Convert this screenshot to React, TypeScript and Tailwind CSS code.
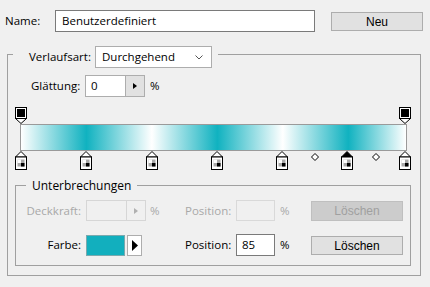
import React from 'react';

const font = { fontFamily: '"Open Sans", "Noto Sans", sans-serif' };
const btnFont = { fontFamily: '"Liberation Sans", Arial, sans-serif' };

const colorStops = [0, 17, 34, 51, 68, 85, 100];
const midpoints = [76.5, 92.5];

function StepArrow({ disabled }: { disabled?: boolean }) {
  return (
    <div
      className={`flex h-full w-[20px] items-center justify-center border ${
        disabled ? 'border-[#d6d6d6] bg-[#f0f0f0]' : 'border-[#adadad] bg-[#e1e1e1]'
      }`}
    >
      <svg width="4" height="6" viewBox="0 0 4 6">
        <path d="M0 0 L4 3 L0 6 Z" fill={disabled ? '#b0b0b0' : '#000'} />
      </svg>
    </div>
  );
}

function ColorStop({ pos, selected }: { pos: number; selected?: boolean }) {
  return (
    <svg
      className="absolute top-[44px]"
      style={{ left: 13 + (pos / 100) * 384 - 6 }}
      width="12"
      height="19"
      viewBox="0 0 12 19"
    >
      <path d="M6 0.5 L11.5 6 L0.5 6 Z" fill={selected ? '#000' : '#fff'} stroke="#000" />
      <rect x="0.5" y="6" width="11" height="12.5" fill="#fff" stroke="#000" />
      <rect x="2.5" y="8.5" width="7" height="7" fill="#a8a8a8" />
      <rect x="2.5" y="8.5" width="3.5" height="3.5" fill="#fff" />
      <rect x="6" y="12" width="3.5" height="3.5" fill="#000" />
    </svg>
  );
}

function OpacityStop({ pos }: { pos: number }) {
  return (
    <svg
      className="absolute top-0"
      style={{ left: 13 + (pos / 100) * 384 - 6 }}
      width="12"
      height="17"
      viewBox="0 0 12 17"
    >
      <rect x="0.5" y="0.5" width="11" height="11" fill="#fff" stroke="#000" />
      <rect x="2" y="2" width="8" height="8" fill="#000" />
      <path d="M0.5 11.5 L11.5 11.5 L6 16.5 Z" fill="#fff" stroke="#000" />
    </svg>
  );
}

function Midpoint({ pos }: { pos: number }) {
  return (
    <svg
      className="absolute top-[46px]"
      style={{ left: 13 + (pos / 100) * 384 - 4 }}
      width="8"
      height="8"
      viewBox="0 0 8 8"
    >
      <path d="M4 0.5 L7.5 4 L4 7.5 L0.5 4 Z" fill="#fff" stroke="#000" />
    </svg>
  );
}

export default function App() {
  return (
    <div className="h-[287px] w-[430px] overflow-hidden bg-[#f0f0f0] text-[11.5px] text-black" style={font}>
      {/* Name row */}
      <div className="flex items-center pl-[5px] pt-[10px]">
        <span className="w-[50px]">Name:</span>
        <div className="flex h-[22px] w-[260px] items-center border border-[#7a7a7a] bg-white pl-[6px]">
          Benutzerdefiniert
        </div>
        <button
          className="ml-[16px] h-[19px] w-[92px] border border-[#adadad] bg-[#e1e1e1] text-[12px]"
          style={btnFont}
        >
          Neu
        </button>
      </div>

      {/* Outer group */}
      <div className="ml-[7px] mt-[22px] h-[222px] w-[414px] border border-[#a0a0a0]">
        <div className="-mt-[9px] ml-[5px] flex w-fit items-center bg-[#f0f0f0] pl-[16px] pr-[6px]">
          <span className="w-[66px]">Verlaufsart:</span>
          <div className="flex h-[22px] w-[117px] items-center justify-between border border-[#adadad] bg-white pl-[6px] pr-[8px]">
            <span>Durchgehend</span>
            <svg width="8" height="5" viewBox="0 0 8 5">
              <path d="M0.5 0.5 L4 4 L7.5 0.5" fill="none" stroke="#555" />
            </svg>
          </div>
        </div>

        <div className="mt-[7px] flex h-[22px] items-center pl-[23px]">
          <span className="w-[54px]">Glättung:</span>
          <div className="flex h-full w-[60px]">
            <div className="flex h-full w-[41px] items-center border border-r-0 border-[#adadad] bg-white pl-[5px]">0</div>
            <StepArrow />
          </div>
          <span className="ml-[5px]">%</span>
        </div>

        {/* Gradient editor */}
        <div className="relative mt-[10px] h-[63px]">
          <OpacityStop pos={0} />
          <OpacityStop pos={100} />
          <div className="ml-[12px] mt-[17px] inline-block h-[27px] w-[387px] border border-[#9a9a9a] align-top">
            <div className="h-full w-full bg-[linear-gradient(to_right,#ffffff_0%,#10b2c0_17%,#ffffff_34%,#10b2c0_51%,#ffffff_68%,#10b2c0_85%,#ffffff_100%)]" />
          </div>
          {colorStops.map((p) => (
            <ColorStop key={p} pos={p} selected={p === 85} />
          ))}
          {midpoints.map((p) => (
            <Midpoint key={p} pos={p} />
          ))}
        </div>

        {/* Inner group */}
        <div className="ml-[7px] mt-[15px] h-[81px] w-[396px] border border-[#a0a0a0]">
          <div className="-mt-[9px] ml-[10px] flex h-[17px] w-fit items-center bg-[#f0f0f0] px-[6px] text-[12px]">
            Unterbrechungen
          </div>

          <div className="mt-[6px] flex h-[21px] items-center text-[#a8a8a8]">
            <span className="w-[65px] text-right">Deckkraft:</span>
            <div className="ml-[5px] flex h-full w-[60px]">
              <div className="h-full w-[40px] border border-r-0 border-[#d6d6d6] bg-[#f0f0f0]" />
              <StepArrow disabled />
            </div>
            <span className="w-[39px] pl-[4px]">%</span>
            <span className="w-[46px]">Position:</span>
            <div className="ml-[5px] h-full w-[39px] border border-[#d9d9d9] bg-[#f0f0f0]" />
            <span className="w-[36px] pl-[5px]">%</span>
            <button
              className="h-[20px] w-[92px] border border-[#bfbfbf] bg-[#cccccc] text-[12px] text-[#a0a0a0]"
              style={btnFont}
            >
              Löschen
            </button>
          </div>

          <div className="mt-[13px] flex h-[22px] items-center">
            <span className="w-[65px] text-right">Farbe:</span>
            <div className="ml-[5px] flex h-[21px] w-[60px] items-center">
              <div className="h-full w-[39px] border border-[#7aa9ae] bg-[#12afbe]" />
              <div className="ml-[2px] flex h-full w-[15px] items-center justify-center border border-[#adadad] bg-white">
                <svg width="6" height="11" viewBox="0 0 6 11">
                  <path d="M0 0 L6 5.5 L0 11 Z" fill="#000" />
                </svg>
              </div>
            </div>
            <span className="w-[39px]" />
            <span className="w-[46px]">Position:</span>
            <div className="ml-[5px] flex h-full w-[39px] items-center border border-[#7a7a7a] bg-white pl-[5px]">85</div>
            <span className="w-[36px] pl-[5px]">%</span>
            <button
              className="h-[19px] w-[92px] border border-[#adadad] bg-[#e1e1e1] text-[12px]"
              style={btnFont}
            >
              Löschen
            </button>
          </div>
        </div>
      </div>
    </div>
  );
}
